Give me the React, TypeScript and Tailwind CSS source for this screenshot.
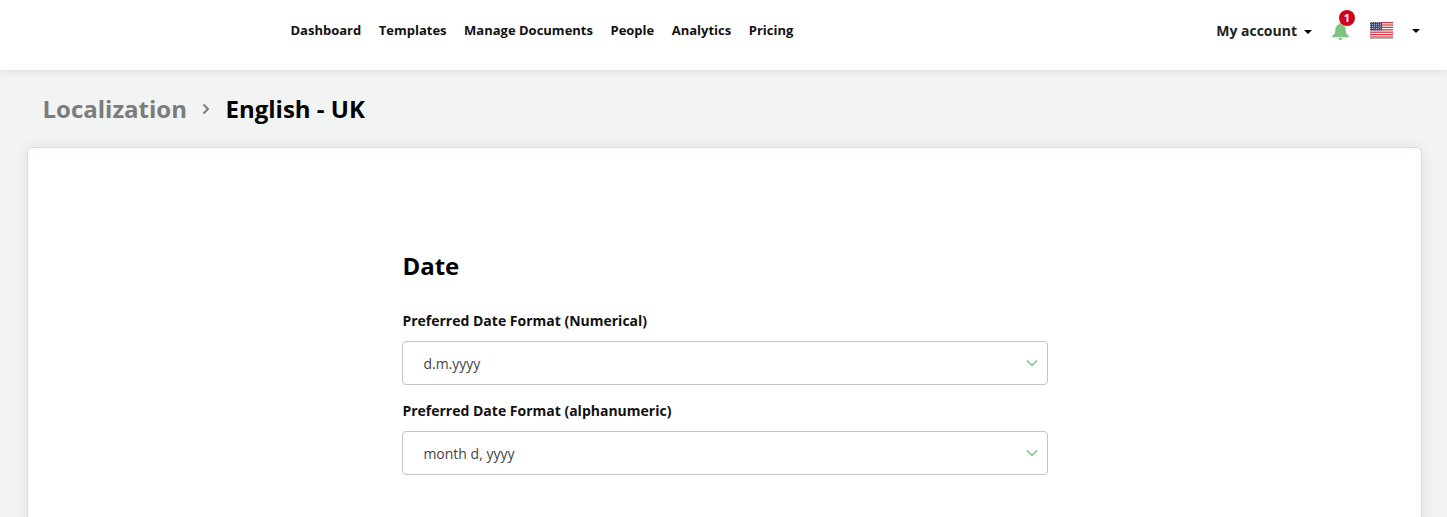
import React from "react";

const nav = ["Dashboard", "Templates", "Manage Documents", "People", "Analytics", "Pricing"];

function Caret() {
  return <span className="block w-0 h-0 border-x-[4px] border-x-transparent border-t-[4px] border-t-black" />;
}

function Flag() {
  const stripes = [0, 1, 2, 3, 4, 5, 6];
  return (
    <svg width="23" height="17" viewBox="0 0 23 17" className="block">
      <defs>
        <pattern id="stars" width="2" height="2" patternUnits="userSpaceOnUse">
          <rect width="2" height="2" fill="#3f4a94" />
          <rect width="1" height="1" fill="#a9adcf" />
        </pattern>
      </defs>
      <rect width="23" height="16" fill="#f6f6f6" />
      {stripes.map((i) => (
        <rect key={i} x="0" y={i * 2.4} width="23" height="1.2" fill="#d8323f" />
      ))}
      <rect width="12" height="8.500" fill="url(#stars)" />
      <rect y="16" width="23" height="1" fill="#b5b5b5" />
    </svg>
  );
}

function Select({ label, value }: { label: string; value: string }) {
  return (
    <div className="flex flex-col">
      <label className="text-[14px] leading-[20px] font-bold text-[#111] mb-[10px]">{label}</label>
      <div className="h-[44px] flex items-center justify-between border border-[#c4c4c4] rounded-[4px] pl-[20px] pr-[9px] bg-white">
        <span className="text-[14px] text-[#444]">{value}</span>
        <svg width="12" height="8" viewBox="0 0 12 8" fill="none" stroke="#7fc28a" strokeWidth="1.5">
          <path d="M1 1.5l5 5 5-5" />
        </svg>
      </div>
    </div>
  );
}

export default function App() {
  return (
    <div className="h-[517px] overflow-hidden bg-[#f2f4f3] font-['Open_Sans',sans-serif]">
      <header className="h-[70px] bg-white flex items-center justify-between pl-[290.500px] pr-[27px] pb-[8px] shadow-[0_1px_8px_rgba(0,0,0,0.1)] relative">
        <nav className="flex gap-[17.500px] text-[13px] font-bold text-[#111]">
          {nav.map((n) => (
            <a key={n}>{n}</a>
          ))}
        </nav>
        <div className="flex items-center">
          <span className="text-[14px] font-bold text-[#222] mr-[7px] -mt-[1px]">My account</span>
          <span className="mt-[2px]">
            <Caret />
          </span>
          <span className="relative ml-[19px] mr-[20px] -mt-[2px]">
            <svg width="19" height="19" viewBox="0 0 24 24" fill="#7cc47f" className="block">
              <path d="M12 2a2 2 0 0 0-2 2v.5C7 5.400 5.500 8 5.500 11c0 4-1 6-4 8v1.500h21V19c-3-2-4-4-4-8 0-3-1.500-5.600-4.500-6.500V4a2 2 0 0 0-2-2z" />
              <path d="M9.500 21.500h5a2.500 2.500 0 0 1-5 0z" />
            </svg>
            <span className="absolute -top-[11px] left-[8px] w-[16px] h-[16px] rounded-full bg-[#d0021b] text-white text-[11px] font-bold leading-[16px] text-center">1</span>
          </span>
          <span className="-mt-[1px]">
            <Flag />
          </span>
          <span className="ml-[19px]">
            <Caret />
          </span>
        </div>
      </header>
      <div className="flex items-center h-[77px] pl-[42.500px]">
        <span className="text-[24px] font-bold text-[#7c7c7c]">Localization</span>
        <svg width="8" height="12" viewBox="0 0 8 12" fill="none" stroke="#7c7c7c" strokeWidth="2" className="ml-[15px] mr-[15.500px]">
          <path d="M1.500 1.500L6 6l-4.500 4.500" />
        </svg>
        <span className="text-[24px] font-bold text-black">English - UK</span>
      </div>
      <main className="ml-[27px] mr-[25px] h-[400px] bg-white rounded-[6px] border border-[#dcdcdc] shadow-[0_0_14px_rgba(0,0,0,0.08)] pt-[100px]">
        <div className="w-[645.500px] ml-[374.400px] flex flex-col">
          <h2 className="text-[24px] leading-[36px] font-bold text-black mb-[27px]">Date</h2>
          <div className="flex flex-col gap-[16px]">
            <Select label="Preferred Date Format (Numerical)" value="d.m.yyyy" />
            <Select label="Preferred Date Format (alphanumeric)" value="month d, yyyy" />
          </div>
        </div>
      </main>
    </div>
  );
}
